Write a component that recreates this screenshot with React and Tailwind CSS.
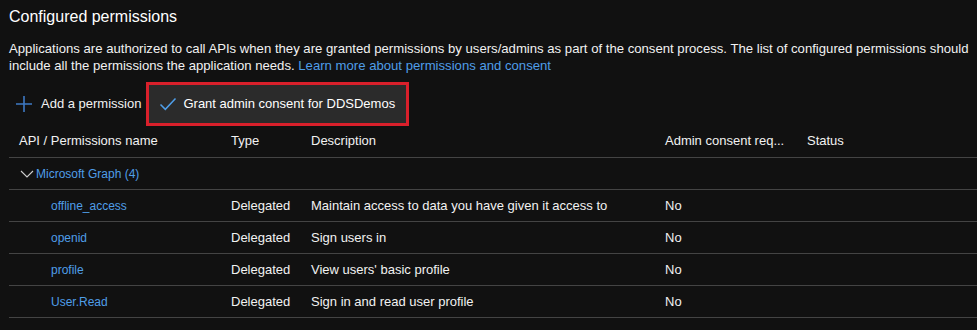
import React from "react";

const rows = [
  { name: "offline_access", type: "Delegated", desc: "Maintain access to data you have given it access to", admin: "No" },
  { name: "openid", type: "Delegated", desc: "Sign users in", admin: "No" },
  { name: "profile", type: "Delegated", desc: "View users' basic profile", admin: "No" },
  { name: "User.Read", type: "Delegated", desc: "Sign in and read user profile", admin: "No" },
];

export default function App() {
  return (
    <div
      className="w-[977px] h-[330px] overflow-hidden bg-[#111111] text-[#f2f2f2] text-[13px] pl-[9px]"
      style={{ fontFamily: '"Segoe UI", "Liberation Sans", Arial, sans-serif' }}
    >
      {/* Title */}
      <h2 className="pt-[6px] text-[16px] leading-[22px] text-white">Configured permissions</h2>

      {/* Description */}
      <p className="mt-[12px] text-[13.15px] leading-[17px] whitespace-nowrap">
        Applications are authorized to call APIs when they are granted permissions by users/admins as part of the consent process. The list of configured permissions should
        <br />
        include all the permissions the application needs.{" "}
        <a className="text-[#4f9ee8]">Learn more about permissions and consent</a>
      </p>

      {/* Toolbar */}
      <div className="mt-[8px] flex items-center h-[44px]">
        <button className="flex items-center h-full pl-[6px] pr-[5px]">
          <svg width="18" height="18" viewBox="0 0 18 18" className="mr-[8px]">
            <path d="M9 1v16M1 9h16" stroke="#3e79c4" strokeWidth="1.6" fill="none" />
          </svg>
          <span>Add a permission</span>
        </button>
        <div className="h-[44px] w-[263px] border-[3px] border-[#d9202b] bg-[#2b2b2b] flex items-center pl-[10px]">
          <svg width="18" height="14" viewBox="0 0 18 14" className="mr-[6px]">
            <path d="M1.5 7.5l4.8 4.8L16.5 1.5" stroke="#4f9ee8" strokeWidth="1.5" fill="none" />
          </svg>
          <span className="text-white">Grant admin consent for DDSDemos</span>
        </div>
      </div>

      {/* Table */}
      <div>
        <div className="flex items-center h-[32px] pb-[1px] border-b border-[#444444] pl-[10px]">
          <div className="w-[212px]">API / Permissions name</div>
          <div className="w-[80px]">Type</div>
          <div className="w-[354px]">Description</div>
          <div className="w-[142px]">Admin consent req...</div>
          <div>Status</div>
        </div>
        <div className="flex items-center h-[32px] border-b border-[#444444] pl-[11px]">
          <svg width="14" height="10" viewBox="0 0 14 10" className="mr-[2px]">
            <path d="M1 2l6 6 6-6" stroke="#cfcfcf" strokeWidth="1.1" fill="none" />
          </svg>
          <span className="text-[#4f9ee8] text-[12px]">Microsoft Graph (4)</span>
        </div>
        {rows.map((r) => (
          <div key={r.name} className="flex items-center h-[32px] border-b border-[#444444] pl-[42px]">
            <div className="w-[180px] text-[#4f9ee8] text-[12px]">{r.name}</div>
            <div className="w-[80px]">{r.type}</div>
            <div className="w-[354px]">{r.desc}</div>
            <div>{r.admin}</div>
          </div>
        ))}
      </div>
    </div>
  );
}
